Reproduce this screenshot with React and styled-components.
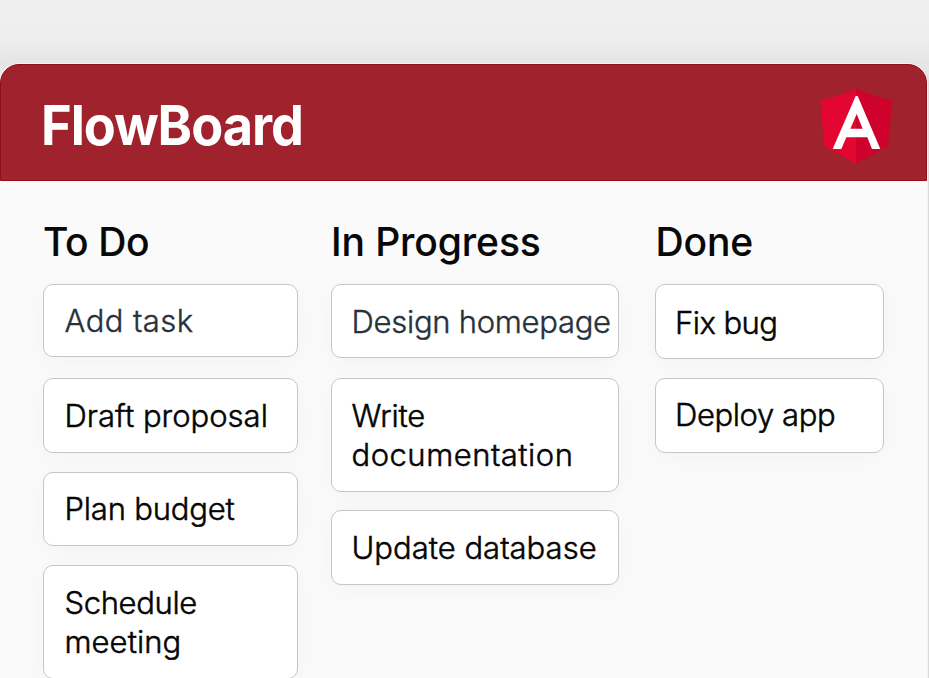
import React from "react";
import styled, { createGlobalStyle } from "styled-components";

const GlobalStyle = createGlobalStyle`
  * { box-sizing: border-box; }
  html, body { margin: 0; padding: 0; overflow: hidden; }
  body { background: #eeeeee; font-family: "Inter", "Liberation Sans", sans-serif; }
`;

const Page = styled.main`
  height: 678px;
  padding: 63.5px 2px 0 0;
  overflow: hidden;
  background: linear-gradient(#efefef 0, #eeeeee 36px, #e5e5e5 64px, #eeeeee 120px);
`;

const Board = styled.section`
  height: 660px;
  border-radius: 19px 19px 0 0;
  background: #fafafa;
  box-shadow: 0 0 0 1px #f4f4f4, 2px 0 0 0 #dadada;
`;

const Header = styled.header`
  display: flex;
  align-items: flex-start;
  justify-content: space-between;
  height: 117px;
  padding: 23.5px 33px 0 40px;
  border: 1px solid #930d14;
  border-radius: 19px 19px 0 0;
  background: #9f222d;
`;

const Title = styled.h1`
  margin: 5px 0 0;
  color: #ffffff;
  font-size: 55px;
  font-weight: 700;
  line-height: 64px;
  letter-spacing: -1.05px;
  white-space: nowrap;
  transform: scaleX(0.95);
  transform-origin: left center;
`;

const Logo = styled.svg`
  display: block;
  width: 73px;
  height: 76px;
`;

const Columns = styled.div`
  display: grid;
  grid-template-columns: 255px 288px 229px;
  column-gap: 33px;
  padding: 36.5px 0 0 43px;
`;

const Column = styled.section`
  margin-left: ${(p) => p.$shift || 0}px;
  width: ${(p) => p.$width}px;
`;

const Heading = styled.h2`
  height: 67px;
  margin: 0;
  padding-left: ${(p) => p.$indent || 0}px;
  color: #080808;
  font-size: 39px;
  font-weight: 500;
  line-height: 50px;
  letter-spacing: ${(p) => p.$tracking}px;
  -webkit-text-stroke: 0.12px currentColor;
  white-space: nowrap;
`;

const Card = styled.article`
  height: ${(p) => p.$height}px;
  margin-bottom: ${(p) => p.$gap}px;
  padding: ${(p) => p.$top}px 0 0 ${(p) => p.$inset}px;
  border: 1px solid #c5c6c8;
  border-radius: 10px;
  background: #ffffff;
  box-shadow: 0 5px 24px rgba(0, 0, 0, 0.03);
  color: ${(p) => (p.$muted ? "#27313b" : "#050505")};
  font-size: 31px;
  font-weight: 300;
  line-height: 39.5px;
  -webkit-text-stroke: ${(p) => (p.$muted ? 0.4 : 0.5)}px currentColor;
  white-space: nowrap;
`;

const Line = styled.div`
  letter-spacing: ${(p) => p.$tracking}px;
`;

const columns = [
  {
    title: "To Do", width: 255, tracking: -0.4, inset: 20.5,
    cards: [
      { lines: [["Add task", 0.42]], height: 73, gap: 21, top: 16, muted: true },
      { lines: [["Draft proposal", 0]], height: 75, gap: 19, top: 17 },
      { lines: [["Plan budget", -0.2]], height: 74, gap: 19, top: 16 },
      { lines: [["Schedule", -0.35], ["meeting", 0.05]], height: 114, gap: 0, top: 16.5 },
    ],
  },
  {
    title: "In Progress", width: 288, tracking: -0.1, inset: 19.5,
    cards: [
      { lines: [["Design homepage", -0.28]], height: 74, gap: 20, top: 17, muted: true },
      { lines: [["Write", -0.2], ["documentation", 0.5]], height: 114, gap: 18, top: 16.5 },
      { lines: [["Update database", 0.01]], height: 75, gap: 0, top: 17 },
    ],
  },
  {
    title: "Done", width: 229, shift: 3, tracking: -0.1, inset: 19, indent: 0.5,
    cards: [
      { lines: [["Fix bug", -0.55]], height: 75, gap: 19, top: 17.5 },
      { lines: [["Deploy app", -0.4]], height: 75, gap: 0, top: 16 },
    ],
  },
];

export default function App() {
  return (
    <Page>
      <GlobalStyle />
      <Board>
        <Header>
          <Title>FlowBoard</Title>
          <Logo viewBox="60 114 219 228" aria-label="Angular">
            <path fill="#e30532" d="M168.500 115Q120 140 62 151L72 288 168.500 341Z" />
            <path fill="#cf022e" d="M168.500 115Q217 140 277 151L264 289 168.500 341Z" />
            <path fill="#fff" fillRule="evenodd" d="M167 138H173L241 297H216L202 262H139L124 297H98ZM151 236H188L170 192Z" />
          </Logo>
        </Header>
        <Columns>
          {columns.map((col) => (
            <Column key={col.title} $width={col.width} $shift={col.shift}>
              <Heading $tracking={col.tracking} $indent={col.indent}>{col.title}</Heading>
              {col.cards.map((card) => (
                <Card
                  key={card.lines[0][0]}
                  $height={card.height}
                  $gap={card.gap}
                  $top={card.top}
                  $inset={col.inset}
                  $muted={card.muted}
                >
                  {card.lines.map(([text, tracking]) => (
                    <Line key={text} $tracking={tracking}>{text}</Line>
                  ))}
                </Card>
              ))}
            </Column>
          ))}
        </Columns>
      </Board>
    </Page>
  );
}
